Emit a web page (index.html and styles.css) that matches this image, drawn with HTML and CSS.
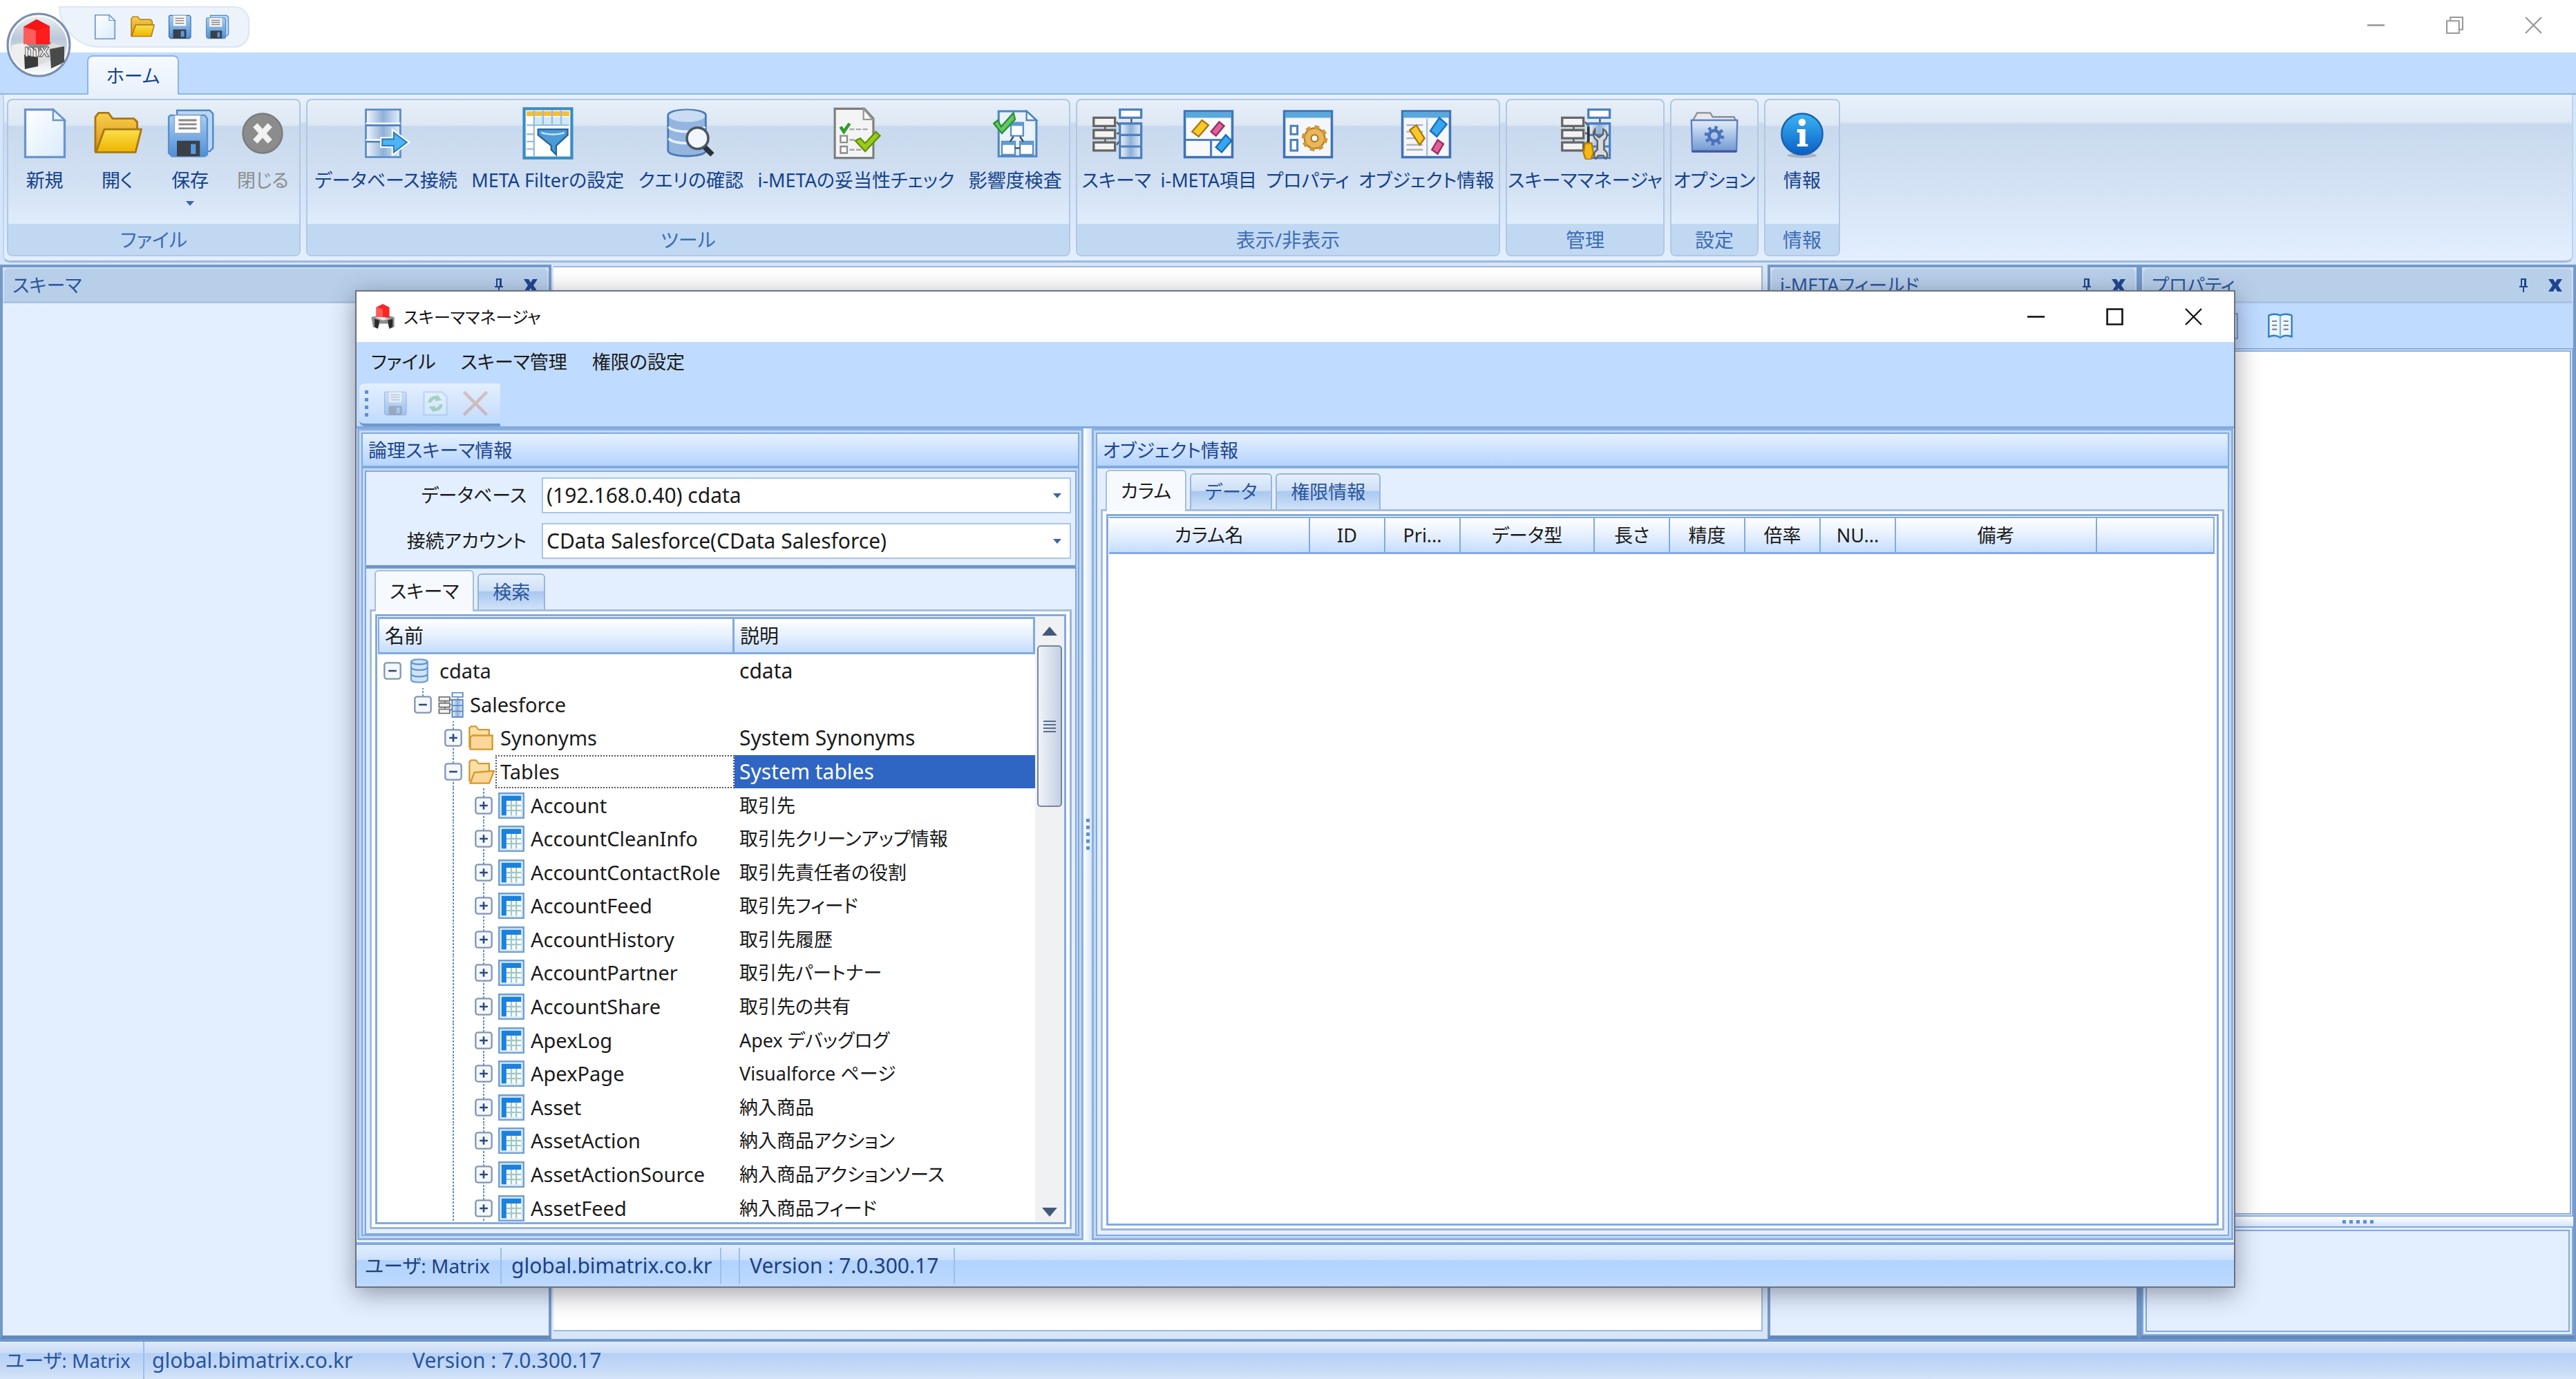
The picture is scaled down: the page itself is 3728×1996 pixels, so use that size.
FILE: index.html
```html
<!DOCTYPE html>
<html lang="ja">
<head>
<meta charset="utf-8">
<title>スキーママネージャ</title>
<link rel="stylesheet" href="styles.css">
</head>
<body>
<svg class="defs" aria-hidden="true">
  <defs>
    <linearGradient id="gPaper" x1="0" y1="0" x2="1" y2="1"><stop offset="0" stop-color="#fff"/><stop offset="1" stop-color="#d9ebfc"/></linearGradient>
    <linearGradient id="gGold" x1="0" y1="0" x2="0" y2="1"><stop offset="0" stop-color="#fbe04a"/><stop offset="1" stop-color="#eeb400"/></linearGradient>
    <linearGradient id="gGoldDark" x1="0" y1="0" x2="0" y2="1"><stop offset="0" stop-color="#f9cf4e"/><stop offset="1" stop-color="#d98f0e"/></linearGradient>
    <linearGradient id="gDisk" x1="0" y1="0" x2="0" y2="1"><stop offset="0" stop-color="#a9cdf2"/><stop offset="1" stop-color="#4f8fd6"/></linearGradient>
    <linearGradient id="gSteel" x1="0" y1="0" x2="1" y2="0"><stop offset="0" stop-color="#f2f7fd"/><stop offset=".5" stop-color="#8fb0d8"/><stop offset="1" stop-color="#e4eefa"/></linearGradient>
    <linearGradient id="gInfo" x1="0" y1="0" x2="0" y2="1"><stop offset="0" stop-color="#3cb4f5"/><stop offset="1" stop-color="#0a5fc4"/></linearGradient>
    <linearGradient id="gOrb" x1="0" y1="0" x2="0" y2="1"><stop offset="0" stop-color="#eef3f9"/><stop offset=".4" stop-color="#b9c7d8"/><stop offset="1" stop-color="#fdfdfe"/></linearGradient>
    <linearGradient id="gFold" x1="0" y1="0" x2="0" y2="1"><stop offset="0" stop-color="#e3edf9"/><stop offset="1" stop-color="#6f98d2"/></linearGradient>
  </defs>
  <symbol id="i-new" viewBox="0 0 32 32"><path d="M4 1.500h17l7 6.500v22.500H4z" fill="url(#gPaper)" stroke="#6a95cb" stroke-width="1.400"/><path d="M21 1.500V8h7z" fill="#eaf4ff" stroke="#6a95cb"/></symbol>
  <symbol id="i-open" viewBox="0 0 32 32"><path d="M2.500 27V6l2-2.500h6L13 7h13l2 2v5L7 27z" fill="url(#gGoldDark)" stroke="#a87714" stroke-width="1.200"/><path d="M3 27.500 8 13.500h22.500L27 27.500z" fill="url(#gGold)" stroke="#a87714" stroke-width="1.200"/></symbol>
  <symbol id="i-save" viewBox="0 0 32 32"><path d="M4 2h24l1.500 2v24.500L28 30H5l-2-2V3z" fill="url(#gDisk)" stroke="#356cae"/><path d="M8 2h16v13H8z" fill="#fafafa" stroke="#8ea9c8" stroke-width=".600"/><path d="M10.500 5.500h11M10.500 8.500h11M10.500 11.500h11" stroke="#888" stroke-width="1.300"/><path d="M8 19h16v11H8z" fill="#3b4047"/><path d="M17.500 21h4v7h-4z" fill="#5a9be0"/></symbol>
  <symbol id="i-saveall" viewBox="0 0 32 32"><path d="M8 2h20l2 2v21l-2 2H10z" fill="#b8d6f5" stroke="#4e86c8"/><path d="M4 5h21l1.500 2v22L25 30H5l-2-2V6z" fill="url(#gDisk)" stroke="#5a8fce"/><path d="M6.500 5h16v11h-16z" fill="#fafafa" stroke="#8ea9c8" stroke-width=".600"/><path d="M9 8h11M9 10.500h11M9 13h11" stroke="#888" stroke-width="1.200"/><path d="M8 20.500h14V30H8z" fill="#3b4047"/><path d="M16.500 22.500h3v6h-3z" fill="#5a9be0"/></symbol>
  <symbol id="i-close" viewBox="0 0 32 32"><circle cx="16" cy="16" r="12" fill="#8c8c8c" stroke="#7b7b7b"/><path d="m11.500 11 9 10m0-10-9 10" stroke="#f2f2f2" stroke-width="3.600"/></symbol>
  <symbol id="i-dbcon" viewBox="0 0 32 32"><path d="M4 1.500h21v29H4z" fill="url(#gSteel)" stroke="#5f8cc6" stroke-width="1.200"/><path d="M4 11h21M4 21h21" stroke="#4f7fbd" stroke-width="1.400"/><path d="M4 10h21M4 20h21" stroke="#fff"/><path d="M14 19.500h7v-4l8 6-8 6v-4h-7z" fill="#4fb4f2" stroke="#fff" stroke-width="2.600"/><path d="M14 19.500h7v-4l8 6-8 6v-4h-7z" fill="#4fb4f2" stroke="#2a7fc4" stroke-width=".900"/></symbol>
  <symbol id="i-filter" viewBox="0 0 32 32"><path d="M1.500 1h29v30h-29z" fill="#fff" stroke="#3a8cc4" stroke-width="1.800"/><path d="M3 2.500h26v3H3z" fill="#f6bd35"/><path d="M8 6h21v4.500H8z" fill="#cdeafa"/><path d="M7.500 2v28M3 11h26M3 16.500h4M3 21h4M3 25.500h4M13 2v9M18.500 2v9M24 2v9" stroke="#9cbcd8"/><path d="M10 13.500h18v3.500l-7 6.500V29l-3-3v-2.500L10 17z" fill="#4c9ad6" stroke="#24649e"/><path d="M12 15.500c4 1.500 10 1.500 14 0" stroke="#c8e6fa" fill="none"/></symbol>
  <symbol id="i-query" viewBox="0 0 32 32"><path d="M2 5c0-4.500 23-4.500 23 0v21.500c0 4.500-23 4.500-23 0z" fill="#93b5e0" stroke="#4b7cba" stroke-width="1.200"/><ellipse cx="13.500" cy="5.500" rx="11" ry="3.600" fill="#c9dcf3"/><path d="M2.500 12c2 4 20 4 22 0M2.500 19c2 4 20 4 22 0" stroke="#e6f1fc" stroke-width="1.500" fill="none"/><path d="m24 24 5 5" stroke="#2c3138" stroke-width="3.200"/><circle cx="20" cy="19" r="6.500" fill="#f2f7fd" stroke="#4b5563" stroke-width="1.500"/></symbol>
  <symbol id="i-check" viewBox="0 0 32 32"><path d="M3 1h18l5.500 6v24H3z" fill="#f4f4f4" stroke="#7d7d7d" stroke-width="1.300"/><path d="M20.500 1v6.500H26z" fill="#fff" stroke="#999"/><path d="M6.500 17.500h4v4h-4zM6.500 24h4v4h-4z" fill="#fff" stroke="#8c8c8c"/><path d="M12 13.500h11M12 20h8M12 26h8" stroke="#a5a5a5" stroke-dasharray="3 1"/><path d="m6.500 12 2 3 3.500-5" stroke="#2f9c2f" stroke-width="2" fill="none"/><path d="m15.500 20.500 3-1.500 3 3L28 15l2.500 2.500-9 9.500z" fill="#9cca18" stroke="#5f9410"/></symbol>
  <symbol id="i-impact" viewBox="0 0 32 32"><path d="M6 2.500h17l6 5.500v22H6z" fill="#e9f3fd" stroke="#4f86c6" stroke-width="1.300"/><path d="M23 2.500V8h6z" fill="#fff" stroke="#4f86c6"/><path d="M13.500 9.500H21v8h-7.500zM8 21h8v8H8zM19 21h8v8h-8z" fill="#fff" stroke="#5b8cc5"/><path d="M13.500 9.500H21v2h-7.500zM8 21h8v2H8zM19 21h8v2h-8z" fill="#5b9bd8"/><path d="m15 18-2 3m6-3 2 3m-5 4h3" stroke="#444"/><path d="m3 10 2.500-2 2 4L15 3.500l1 4L8 16z" fill="#66c766" stroke="#2b8f35"/></symbol>
  <symbol id="i-schema" viewBox="0 0 32 32"><path d="M25 7v4M9 11v15M16 9l3 4M16 16h4M16 23l3-4" stroke="#555"/><path d="M2 6.500h13v5H2zM2 14h13v5H2zM2 21.500h13v5H2z" fill="#f2f2f2" stroke="#666" stroke-width="1.400"/><path d="M18 1.500h13v5H18z" fill="#fff" stroke="#4b80c0" stroke-width="1.400"/><path d="M18 10h13v21H18z" fill="url(#gSteel)" stroke="#4b80c0" stroke-width="1.400"/><path d="M18 17h13M18 24h13" stroke="#4b80c0" stroke-width="1.300"/></symbol>
  <symbol id="i-item" viewBox="0 0 32 32"><path d="M1.500 2.500h29v28h-29z" fill="#f7f9fb" stroke="#3f73b6" stroke-width="1.500"/><path d="M2 3h28v3.500H2z" fill="#5aa8dc"/><path d="M2 20h28M17.500 20v10" stroke="#4b80c0" stroke-width="1.300"/><path d="m12 8 4 3-6 7-4-3z" fill="#f9c92c" stroke="#a8790a"/><path d="m22.500 9 3 2.500-5 6-3-2.500z" fill="#e0629a" stroke="#9c2e60"/><path d="m26.500 17 3.500 3.500-6 7-3.500-3z" fill="#35a6f0" stroke="#1a6db5"/></symbol>
  <symbol id="i-prop" viewBox="0 0 32 32"><path d="M1.500 2.500h29v28h-29z" fill="#f4f6f9" stroke="#3f73b6" stroke-width="1.500"/><path d="M2 3h28v3.500H2z" fill="#5aa8dc"/><path d="M5.500 11.500h4v5h-4zM5.500 20h4v6.500h-4z" fill="#fff" stroke="#4b80c0" stroke-width="1.300"/><circle cx="20" cy="19" r="6.200" fill="#e9b65c" stroke="#b07c22"/><circle cx="20" cy="19" r="6.800" fill="none" stroke="#cf963a" stroke-width="2.200" stroke-dasharray="2.800 2.500"/><circle cx="20" cy="19" r="2.100" fill="#fff" stroke="#b07c22"/></symbol>
  <symbol id="i-object" viewBox="0 0 32 32"><path d="M1.500 2.500h29v28h-29z" fill="#f4f6f9" stroke="#3f73b6" stroke-width="1.500"/><path d="M2 3h28v3.500H2z" fill="#5aa8dc"/><path d="M16.500 7v23" stroke="#a9bfdc"/><path d="M4 11h10M4 15h10M4 19h10M4 23h10M4 26h10" stroke="#aab2bd"/><path d="m6 14 4-3 5 8-3 4z" fill="#f9c92c" stroke="#a8790a"/><path d="m24 6.500 4.500 4-6 7.500-4-3.500z" fill="#35a6f0" stroke="#1a6db5"/><path d="m23 20 3.500 2.500-3.500 6-3.500-2.500z" fill="#e0629a" stroke="#9c2e60"/></symbol>
  <symbol id="i-manager" viewBox="0 0 32 32"><use href="#i-schema" width="32" height="32"/><path d="M18 12v10" stroke="#333" stroke-width="1.500"/><path d="M16 22h4l1 6-1.500 4h-3L15 28z" fill="#f5b915" stroke="#b67f08"/><path d="M22 13.500v3l2.500 2 2.500-2v-3c3 1.500 3 5 .500 7V26c2.500 1.500 2.500 4 1 5.500l-1.500-2h-3l-1.500 2c-1.500-1.500-1.500-4 1-5.500v-5.500c-3-2-3-5.500-1.500-7z" fill="#d6d9dd" stroke="#5c6066"/></symbol>
  <symbol id="i-option" viewBox="0 0 32 32"><path d="M3 8 5.500 3.500h8L15 6h13l1.500 3H3z" fill="#e9e9ec" stroke="#8b8d98"/><path d="M2 8h28l-.500 19h-27z" fill="url(#gFold)" stroke="#5a7fc0"/><path d="M2.500 27h27" stroke="#4553a5" stroke-width="1.400"/><circle cx="16" cy="17.500" r="3.200" fill="none" stroke="#4a72bb" stroke-width="2"/><circle cx="16" cy="17.500" r="5" fill="none" stroke="#4a72bb" stroke-width="2" stroke-dasharray="1.800 2.120"/></symbol>
  <symbol id="i-info" viewBox="0 0 32 32"><ellipse cx="16" cy="29.500" rx="9" ry="1.500" fill="#a9b4c6"/><circle cx="16" cy="16.500" r="12.500" fill="url(#gInfo)" stroke="#1a5fae"/><circle cx="16" cy="9.300" r="2.200" fill="#fff"/><path d="M13 13.500h5v9h1.500V24h-6.500v-1.500h1.500v-7H13z" fill="#fff"/></symbol>
  <symbol id="i-cubes" viewBox="0 0 16 16"><path d="m1 8 4-1 3 2 3-2 4 1v6l-3 1-1-3H6l-1 3-3-1z" fill="#8e8e8e"/><path d="m3 9 3 1-1 5-2-1zM11 10l3-1v5l-2 1z" fill="#2b2b2b"/><path d="m3 8 4 0 5 1-4 1z" fill="#e8e8e8"/><path d="m4 2 4-2 4 2v6H4z" fill="#fb2424"/><path d="m4 2 4 1v5H4z" fill="#ff5a5a"/></symbol>
  <symbol id="i-db" viewBox="0 0 16 16"><path d="M2.500 2.500c0-2 10-2 10 0v11c0 2-10 2-10 0z" fill="#cfe4f8" stroke="#6da2d6"/><path d="M2.500 2.500c1 2 9 2 10 0M2.500 6c1 2 9 2 10 0M2.500 10c1 2 9 2 10 0" stroke="#5f95cc" fill="none"/></symbol>
  <symbol id="i-folder" viewBox="0 0 16 16"><path d="M1 14V2l1-1h3l1.500 2H13v4" fill="#fbe0a4" stroke="#d29a3c"/><path d="M1.500 15V7.500L3 6.500h12V15z" fill="#fbd79a" stroke="#d9972d"/></symbol>
  <symbol id="i-folderopen" viewBox="0 0 16 16"><path d="M1 14V2l1-1h3l1.500 2H13v5" fill="#fbe0a4" stroke="#d29a3c"/><path d="M1.500 15 4 8.500l12-1L13 15z" fill="#fbd79a" stroke="#d9972d"/></symbol>
  <symbol id="i-table" viewBox="0 0 16 16"><path d="M.500.500h15v15H.500z" fill="#dcebfa" stroke="#6f9fd3"/><path d="M2 2h12v12H2z" fill="#fff"/><path d="M2 2h12v3H2zM2 2h3v12H2z" fill="#1a82dc"/><path d="M5 8h9M5 11h9M8 5v9M11 5v9" stroke="#9fc9c4"/></symbol>
  <symbol id="i-plus" viewBox="0 0 12 12"><rect x="1" y="1" width="10" height="10" rx="1.500" fill="#f4f8fd" stroke="#8496b2"/><path d="M3.500 6h5M6 3.500v5" stroke="#2c4a7c" stroke-width="1.100"/></symbol>
  <symbol id="i-minus" viewBox="0 0 12 12"><rect x="1" y="1" width="10" height="10" rx="1.500" fill="#f4f8fd" stroke="#8496b2"/><path d="M3.500 6h5" stroke="#2c4a7c" stroke-width="1.100"/></symbol>
  <symbol id="i-pin" viewBox="0 0 16 24"><path d="M4 2h8v11h2v2H9v7H7v-7H2v-2h2zm2 2v9h3V4z" fill="#1e4690" fill-rule="evenodd"/></symbol>
  <symbol id="i-x" viewBox="0 0 24 24"><path d="M2 3h7l3 5 3-5h7l-6 9 6 9h-7l-3-5-3 5H2l6-9z" fill="#1e4690"/></symbol>
  <symbol id="i-book" viewBox="0 0 16 16"><path d="M1 1.500c2-1 5-1 7 0 2-1 5-1 7 0v13c-2-1-5-1-7 .500-2-1.500-5-1.500-7-.500z" fill="#eef7ff" stroke="#2f7cc8"/><path d="M8 2v12" stroke="#7fb6e6"/><path d="M3 5h3M3 7.500h3M3 10h3M10 5h3M10 7.500h3M10 10h3" stroke="#8a8f96"/></symbol>
  <symbol id="i-refresh" viewBox="0 0 16 16"><path d="M1 1h11l3 3v11H1z" fill="#eaf4fd" stroke="#8fb4dc"/><path d="M4.500 7.500A3.500 3.500 0 0 1 10 5M11.500 8.500A3.500 3.500 0 0 1 6 11" fill="none" stroke="#3fae58" stroke-width="2"/><path d="m9 2.500 3 3.500-4 .500zM7 13.500 4 10l4-.500z" fill="#3fae58"/></symbol>
  <symbol id="i-delete" viewBox="0 0 16 16"><path d="m1 1 14 14M15 1 1 15" stroke="#c9704f" stroke-width="1.800"/></symbol>
  <symbol id="w-min" viewBox="0 0 24 24"><path d="M0 12h24" stroke="currentColor" stroke-width="2.500"/></symbol>
  <symbol id="w-max" viewBox="0 0 24 24"><path d="M1.500 1.500h21v21h-21z" fill="none" stroke="currentColor" stroke-width="2.500"/></symbol>
  <symbol id="w-restore" viewBox="0 0 24 24"><path d="M1 6h17v17H1zM6 6V1h17v17h-5" fill="none" stroke="currentColor" stroke-width="2"/></symbol>
  <symbol id="w-close" viewBox="0 0 24 24"><path d="m1 1 22 22M23 1 1 23" stroke="currentColor" stroke-width="2.200"/></symbol>
</svg>

<header class="titlebar">
  <nav class="quick" aria-label="クイックアクセス">
    <button type="button" aria-label="新規"><svg><use href="#i-new"/></svg></button>
    <button type="button" aria-label="開く"><svg><use href="#i-open"/></svg></button>
    <button type="button" aria-label="保存"><svg><use href="#i-save"/></svg></button>
    <button type="button" aria-label="すべて保存"><svg><use href="#i-saveall"/></svg></button>
  </nav>
  <div class="winbtns winbtns-main">
    <button type="button" aria-label="最小化"><svg><use href="#w-min"/></svg></button>
    <button type="button" aria-label="元に戻す"><svg><use href="#w-restore"/></svg></button>
    <button type="button" aria-label="閉じる"><svg><use href="#w-close"/></svg></button>
  </div>
  <button type="button" class="orb" aria-label="メニュー">
    <svg viewBox="0 0 96 96">
      <circle cx="48" cy="48" r="45" fill="url(#gOrb)" stroke="#7a8fae" stroke-width="3"/>
      <circle cx="48" cy="48" r="42" fill="none" stroke="#fff" stroke-width="2"/>
      <path d="m9 48 18-3 20 12v22l-20-8v10L9 68z" fill="#eeeeee"/>
      <path d="m27 62 20 4v13l-19 4z" fill="#3a3a3a"/>
      <path d="m47 57 20-12 18 5v24L66 82V70l-19 8z" fill="#dcdcdc"/>
      <path d="m64 54 21-4v23L66 82z" fill="#4a4a4a"/>
      <path d="m27 45 20-6 20 6-20 14z" fill="#8d8d8d"/>
      <path d="m26 22 19-11 19 10v26H26z" fill="#ff1c1c"/>
      <path d="m26 22 18 5v20H26z" fill="#ff5c5c"/>
      <path d="m26 22 19-11 19 10-20 6z" fill="#f21616"/>
      <text x="45" y="65" font-size="25" font-weight="bold" text-anchor="middle" fill="#fff" stroke="#555" stroke-width="1">mx</text>
    </svg>
  </button>
</header>

<div class="ribbon-tabs" role="tablist"><button type="button" role="tab" aria-selected="true">ホーム</button></div>

<section class="ribbon">
  <div class="group g-file">
    <div class="tools">
      <button type="button"><svg><use href="#i-new"/></svg>新規</button>
      <button type="button"><svg><use href="#i-open"/></svg>開く</button>
      <button type="button"><svg><use href="#i-saveall"/></svg>保存<i class="drop"></i></button>
      <button type="button" disabled><svg><use href="#i-close"/></svg>閉じる</button>
    </div>
    <h2>ファイル</h2>
  </div>
  <div class="group g-tool">
    <div class="tools">
      <button type="button"><svg><use href="#i-dbcon"/></svg>データベース接続</button>
      <button type="button"><svg><use href="#i-filter"/></svg>META Filterの設定</button>
      <button type="button"><svg><use href="#i-query"/></svg>クエリの確認</button>
      <button type="button"><svg><use href="#i-check"/></svg>i-METAの妥当性チェック</button>
      <button type="button"><svg><use href="#i-impact"/></svg>影響度検査</button>
    </div>
    <h2>ツール</h2>
  </div>
  <div class="group g-view">
    <div class="tools">
      <button type="button"><svg><use href="#i-schema"/></svg>スキーマ</button>
      <button type="button"><svg><use href="#i-item"/></svg>i-META項目</button>
      <button type="button"><svg><use href="#i-prop"/></svg>プロパティ</button>
      <button type="button"><svg><use href="#i-object"/></svg>オブジェクト情報</button>
    </div>
    <h2>表示/非表示</h2>
  </div>
  <div class="group g-admin">
    <div class="tools"><button type="button"><svg><use href="#i-manager"/></svg>スキーママネージャ</button></div>
    <h2>管理</h2>
  </div>
  <div class="group g-option">
    <div class="tools"><button type="button"><svg><use href="#i-option"/></svg>オプション</button></div>
    <h2>設定</h2>
  </div>
  <div class="group g-info">
    <div class="tools"><button type="button"><svg><use href="#i-info"/></svg>情報</button></div>
    <h2>情報</h2>
  </div>
</section>

<main class="work">
  <section class="dock dock-schema">
    <div class="dock-head"><h2>スキーマ</h2><svg class="pin"><use href="#i-pin"/></svg><svg class="x"><use href="#i-x"/></svg></div>
    <div class="dock-body"></div>
  </section>
  <section class="canvas"></section>
  <section class="dock dock-fields">
    <div class="dock-head"><h2>i-METAフィールド</h2><svg class="pin"><use href="#i-pin"/></svg><svg class="x"><use href="#i-x"/></svg></div>
    <div class="dock-body"></div>
  </section>
  <section class="dock dock-props">
    <div class="dock-head"><h2>プロパティ</h2><svg class="pin"><use href="#i-pin"/></svg><svg class="x"><use href="#i-x"/></svg></div>
    <div class="prop-bar"><svg><use href="#i-table"/></svg><svg><use href="#i-book"/></svg></div>
    <div class="prop-grid"></div>
    <div class="grip-row"><i></i><i></i><i></i><i></i><i></i></div>
    <div class="prop-help"></div>
  </section>
</main>

<footer class="status status-main">
  <span class="s-user">ユーザ: Matrix</span><span class="s-host">global.bimatrix.co.kr</span><span class="s-ver">Version : 7.0.300.17</span>
</footer>

<section class="dialog" role="dialog" aria-labelledby="dlg-title">
  <header class="dlg-title">
    <svg class="dlg-icon"><use href="#i-cubes"/></svg>
    <h1 id="dlg-title">スキーママネージャ</h1>
    <div class="winbtns">
      <button type="button" aria-label="最小化"><svg><use href="#w-min"/></svg></button>
      <button type="button" aria-label="最大化"><svg><use href="#w-max"/></svg></button>
      <button type="button" aria-label="閉じる"><svg><use href="#w-close"/></svg></button>
    </div>
  </header>
  <nav class="menu">
    <button type="button">ファイル</button>
    <button type="button">スキーマ管理</button>
    <button type="button">権限の設定</button>
  </nav>
  <div class="toolstrip-row">
    <div class="toolstrip">
      <span class="grip-col"><i></i><i></i><i></i><i></i></span>
      <button type="button" aria-label="保存" disabled><svg><use href="#i-save"/></svg></button>
      <button type="button" aria-label="更新" disabled><svg><use href="#i-refresh"/></svg></button>
      <button type="button" aria-label="削除" disabled><svg><use href="#i-delete"/></svg></button>
    </div>
  </div>
  <div class="panes">
    <section class="pane pane-left">
      <h2>論理スキーマ情報</h2>
      <div class="pane-inner">
        <form class="conn">
          <label for="db">データベース</label>
          <span class="combo"><select id="db"><option>(192.168.0.40) cdata</option></select><i class="drop"></i></span>
          <label for="acc">接続アカウント</label>
          <span class="combo"><select id="acc"><option>CData Salesforce(CData Salesforce)</option></select><i class="drop"></i></span>
        </form>
        <div class="tabs" role="tablist">
          <button type="button" role="tab" aria-selected="true">スキーマ</button>
          <button type="button" role="tab">検索</button>
        </div>
        <div class="tabpage">
          <div class="treebox">
            <div class="treeclip">
              <table class="tree">
                <thead><tr><th class="c-name">名前</th><th>説明</th></tr></thead>
                <tbody>
                  <tr><td><span class="node"><i class="ex"><svg><use href="#i-minus"/></svg></i><svg class="ic"><use href="#i-db"/></svg><b>cdata</b></span></td><td class="latin">cdata</td></tr>
                  <tr><td><span class="node"><i></i><i class="ex up"><svg><use href="#i-minus"/></svg></i><svg class="ic"><use href="#i-schema"/></svg><b>Salesforce</b></span></td><td></td></tr>
                  <tr><td><span class="node"><i></i><i></i><i class="ex mid"><svg><use href="#i-plus"/></svg></i><svg class="ic"><use href="#i-folder"/></svg><b>Synonyms</b></span></td><td class="latin">System Synonyms</td></tr>
                  <tr class="selected"><td><span class="node"><i></i><i></i><i class="ex mid"><svg><use href="#i-minus"/></svg></i><svg class="ic"><use href="#i-folderopen"/></svg><b>Tables</b></span></td><td class="latin">System tables</td></tr>
                  <tr><td><span class="node"><i></i><i></i><i class="ln"></i><i class="ex mid"><svg><use href="#i-plus"/></svg></i><svg class="ic"><use href="#i-table"/></svg><b>Account</b></span></td><td>取引先</td></tr>
                  <tr><td><span class="node"><i></i><i></i><i class="ln"></i><i class="ex mid"><svg><use href="#i-plus"/></svg></i><svg class="ic"><use href="#i-table"/></svg><b>AccountCleanInfo</b></span></td><td>取引先クリーンアップ情報</td></tr>
                  <tr><td><span class="node"><i></i><i></i><i class="ln"></i><i class="ex mid"><svg><use href="#i-plus"/></svg></i><svg class="ic"><use href="#i-table"/></svg><b>AccountContactRole</b></span></td><td>取引先責任者の役割</td></tr>
                  <tr><td><span class="node"><i></i><i></i><i class="ln"></i><i class="ex mid"><svg><use href="#i-plus"/></svg></i><svg class="ic"><use href="#i-table"/></svg><b>AccountFeed</b></span></td><td>取引先フィード</td></tr>
                  <tr><td><span class="node"><i></i><i></i><i class="ln"></i><i class="ex mid"><svg><use href="#i-plus"/></svg></i><svg class="ic"><use href="#i-table"/></svg><b>AccountHistory</b></span></td><td>取引先履歴</td></tr>
                  <tr><td><span class="node"><i></i><i></i><i class="ln"></i><i class="ex mid"><svg><use href="#i-plus"/></svg></i><svg class="ic"><use href="#i-table"/></svg><b>AccountPartner</b></span></td><td>取引先パートナー</td></tr>
                  <tr><td><span class="node"><i></i><i></i><i class="ln"></i><i class="ex mid"><svg><use href="#i-plus"/></svg></i><svg class="ic"><use href="#i-table"/></svg><b>AccountShare</b></span></td><td>取引先の共有</td></tr>
                  <tr><td><span class="node"><i></i><i></i><i class="ln"></i><i class="ex mid"><svg><use href="#i-plus"/></svg></i><svg class="ic"><use href="#i-table"/></svg><b>ApexLog</b></span></td><td>Apex デバッグログ</td></tr>
                  <tr><td><span class="node"><i></i><i></i><i class="ln"></i><i class="ex mid"><svg><use href="#i-plus"/></svg></i><svg class="ic"><use href="#i-table"/></svg><b>ApexPage</b></span></td><td>Visualforce ページ</td></tr>
                  <tr><td><span class="node"><i></i><i></i><i class="ln"></i><i class="ex mid"><svg><use href="#i-plus"/></svg></i><svg class="ic"><use href="#i-table"/></svg><b>Asset</b></span></td><td>納入商品</td></tr>
                  <tr><td><span class="node"><i></i><i></i><i class="ln"></i><i class="ex mid"><svg><use href="#i-plus"/></svg></i><svg class="ic"><use href="#i-table"/></svg><b>AssetAction</b></span></td><td>納入商品アクション</td></tr>
                  <tr><td><span class="node"><i></i><i></i><i class="ln"></i><i class="ex mid"><svg><use href="#i-plus"/></svg></i><svg class="ic"><use href="#i-table"/></svg><b>AssetActionSource</b></span></td><td>納入商品アクションソース</td></tr>
                  <tr><td><span class="node"><i></i><i></i><i class="ln"></i><i class="ex mid"><svg><use href="#i-plus"/></svg></i><svg class="ic"><use href="#i-table"/></svg><b>AssetFeed</b></span></td><td>納入商品フィード</td></tr>
                </tbody>
              </table>
            </div>
            <div class="scroll"><i class="arrow up"></i><div class="thumb"><i></i><i></i><i></i><i></i></div><i class="arrow down"></i></div>
          </div>
        </div>
      </div>
    </section>
    <div class="splitter"><i></i><i></i><i></i><i></i><i></i></div>
    <section class="pane pane-right">
      <h2>オブジェクト情報</h2>
      <div class="pane-body">
        <div class="tabs" role="tablist">
          <button type="button" role="tab" aria-selected="true">カラム</button>
          <button type="button" role="tab">データ</button>
          <button type="button" role="tab">権限情報</button>
        </div>
        <div class="tabpage">
          <div class="gridbox">
            <table class="cols">
              <colgroup><col class="w-name"><col class="w-s"><col class="w-s"><col class="w-type"><col class="w-s"><col class="w-s"><col class="w-s"><col class="w-s"><col class="w-name"><col></colgroup>
              <thead><tr><th>カラム名</th><th>ID</th><th>Pri...</th><th>データ型</th><th>長さ</th><th>精度</th><th>倍率</th><th>NU...</th><th>備考</th><th></th></tr></thead>
            </table>
          </div>
        </div>
      </div>
    </section>
  </div>
  <footer class="status status-dlg">
    <span class="s-user">ユーザ: Matrix</span><span class="s-host">global.bimatrix.co.kr</span><span class="s-gap"></span><span class="s-ver">Version : 7.0.300.17</span>
  </footer>
</section>
</body>
</html>
```
FILE: styles.css
```css
:root {
  --line: #82aadf;
  --line-dark: #6f97cc;
  --frame: #c3d8f4;
  --panel: #e3efff;
  --sky: #bfdbff;
  --navy: #1e4690;
}
* { box-sizing: border-box; }
html, body { height: 100%; }
body {
  margin: 0;
  display: flex;
  flex-direction: column;
  position: relative;
  overflow: hidden;
  background: #d7e5f7;
  color: #1a1a1a;
  font: 27px/40px "Noto Sans", "Noto Sans CJK JP", sans-serif;
  font-feature-settings: "palt";
}
h1, h2 { margin: 0; font-size: inherit; font-weight: 400; }
button, select { font: inherit; font-feature-settings: inherit; color: inherit; border: 0; background: none; padding: 0; margin: 0; white-space: nowrap; }
i { display: block; font-style: normal; }
svg { display: block; }
.defs { position: absolute; width: 0; height: 0; }
.drop { width: 0; border: 6px solid transparent; border-top: 7px solid #3e66a8; border-bottom: 0; }

/* main window title */
.titlebar { position: relative; flex: none; height: 76px; display: flex; justify-content: space-between; align-items: flex-start; background: #fff; }
.quick { display: flex; gap: 16px; align-items: center; height: 60px; margin: 9px 0 0 85px; padding: 0 26px 0 46px; border: 2px solid #dbe6f4; border-radius: 0 32px 32px 90px; background: #edf3fb; }
.quick svg { width: 38px; height: 38px; }
.winbtns { display: flex; gap: 89px; padding-right: 46px; align-items: center; }
.winbtns svg { width: 25px; height: 25px; }
.winbtns-main { color: #999; padding: 24px 49px 0 0; }
.orb { position: absolute; left: 8px; top: 17px; z-index: 2; }
.orb svg { width: 96px; height: 96px; }
.orb text { font-family: "Liberation Sans", sans-serif; }

/* ribbon */
.ribbon-tabs { flex: none; height: 61px; padding: 4px 0 0 126px; background: var(--sky); border-bottom: 2px solid #8fb4e6; }
.ribbon-tabs button { height: 57px; width: 133px; border: 2px solid #8fb4e6; border-bottom: 0; border-radius: 8px 8px 0 0; background: linear-gradient(#f6faff, #e8f0fa); color: #15428b; }
.ribbon { flex: none; height: 243px; display: flex; gap: 8px; margin: 0 4px; padding: 6px 4px; border: 2px solid #b7d6f2; border-top: 0; border-bottom: 3px solid #9db9dc; border-radius: 0 0 10px 10px; background: linear-gradient(#e9f1fb, #dde9f6 16%, #c9d9ed 18%, #d3e2f4 55%, #e3efff); }
.group { display: flex; flex-direction: column; border: 2px solid #b0c8e4; border-radius: 8px; overflow: hidden; background: linear-gradient(#e7eff8, #dde8f4 16%, #c9d9ed 17%, #d2e1f3 55%, #dfecfc 80%); }
.tools { flex: 1; display: flex; padding: 10px 0 0; }
.tools button { flex: 1 0 auto; display: flex; flex-direction: column; align-items: center; justify-content: flex-start; color: #15428b; gap: 10px; }
.tools svg { width: 76px; height: 76px; }
.tools button:disabled { color: #8d8d8d; }
.group h2 { flex: none; height: 45px; padding-top: 3px; text-align: center; background: #c1d8f2; color: #3e6db5; font-size: 28px; }
.g-file { width: 425px; }
.g-file .tools button { flex: 1 1 0; }
.g-tool { width: 1106px; }
.g-view { width: 614px; }
.g-admin { width: 230px; }
.g-option { width: 128px; }
.g-info { width: 110px; }

/* docked panels */
.work { flex: 1; min-height: 0; display: grid; grid-template-columns: 798px minmax(0, 1fr) 538px 632px; border-bottom: 4px solid var(--line-dark); margin-top: 3px; }
.dock { display: flex; flex-direction: column; min-width: 0; border: 4px solid #7499c9; border-bottom: 5px solid #6388bb; }
.dock-head { flex: none; display: flex; align-items: center; height: 52px; padding: 0 12px; border: 2px solid #ccdcf0; border-bottom: 3px solid #a9c3e2; border-radius: 8px 8px 0 0; background: #b8cfea; color: #2a559c; }
.dock-head h2 { flex: 1; }
.pin { width: 16px; height: 26px; margin-right: 26px; }
.x { width: 24px; height: 24px; }
.dock-body { flex: 1; background: var(--panel); }
.canvas { margin: 2px 7px 11px 3px; border: 2px solid #9db9dc; border-left: 0; background: #fff; }
.prop-bar { flex: none; display: flex; gap: 40px; align-items: center; height: 65px; padding-left: 100px; background: var(--sky); }
.prop-bar svg { width: 40px; height: 38px; }
.prop-grid { flex: 1; background: #fff; border: 5px double var(--line); }
.grip-row { flex: none; display: flex; gap: 5px; justify-content: center; align-items: center; height: 14px; background: linear-gradient(#fff, #d5e5fa); }
.grip-row i { width: 5px; height: 5px; background: #5b8fd4; }
.prop-help { flex: none; height: 158px; background: var(--panel); border: 7px double var(--line); }

/* status bars */
.status { flex: none; display: flex; align-items: center; white-space: nowrap; color: #1f3f7d; font-size: 30px; }
.status span { height: 100%; display: flex; align-items: center; border-right: 2px solid #9dbfe9; }
.status .s-user { font-size: 28px; }
.status-main { height: 54px; color: #2a559c; background: linear-gradient(#dfeafa, #c8dcf6 30%, #b4cff6 32%, #c8dcf6 80%, #d6e5f7); }
.status-main .s-user { width: 209px; padding-left: 8px; }
.status-main .s-host { width: 388px; padding-left: 11px; border: 0; }
.status-main .s-ver { border: 0; }

/* schema manager window */
.dialog { position: absolute; left: 514px; right: 493px; top: 420px; bottom: 132px; display: flex; flex-direction: column; border: 2px solid #6b7280; background: var(--sky); box-shadow: 0 8px 34px rgba(40, 40, 60, .45); }
.dlg-title { flex: none; display: flex; align-items: center; height: 73px; padding-left: 19px; background: #fff; color: #111; }
.dlg-icon { width: 38px; height: 38px; margin-right: 11px; }
.dlg-title h1 { flex: 1; font-size: 24px; }
.menu { flex: none; display: flex; gap: 36px; height: 60px; padding: 0 21px 2px; }
.toolstrip-row { flex: none; height: 62px; padding-left: 4px; }
.toolstrip { display: flex; align-items: center; gap: 20px; width: 204px; height: 62px; padding: 0 0 0 8px; border-bottom: 4px solid var(--line-dark); border-radius: 8px 0 0 8px; background: linear-gradient(#e3efff, #d0e3fc 60%, #bfdbff); }
.toolstrip svg { width: 38px; height: 38px; opacity: .35; }
.grip-col { display: grid; gap: 6px; width: 5px; }
.grip-col i { height: 5px; background: #5b8fd4; }
.panes { flex: 1; min-height: 0; display: grid; grid-template-columns: 1051px 12px minmax(0, 1fr); padding: 0 1px 3px; border-top: 3px solid var(--line); border-bottom: 4px solid var(--line); background: #e9f2fe; }
.pane { display: flex; flex-direction: column; min-width: 0; min-height: 0; border: 3px solid #8ab0e2; outline: 2px solid var(--line); outline-offset: -8px; padding: 5px; background: var(--frame); }
.pane > h2 { flex: none; height: 50px; padding: 4px 8px 0; border-bottom: 4px solid var(--line); background: linear-gradient(#e6f1ff, #b4d4ff); color: var(--navy); }
.splitter { display: flex; flex-direction: column; justify-content: center; align-items: center; gap: 5px; background: linear-gradient(90deg, #fff, #d5e5fa); }
.splitter i { width: 5px; height: 5px; background: #5b8fd4; }
.pane-inner, .pane-body { flex: 1; min-height: 0; display: flex; flex-direction: column; background: var(--panel); }
.pane-inner { margin: 3px 2px 0 3px; border: 2px solid var(--line); }
.conn { flex: none; display: grid; grid-template-columns: 232px 1fr; gap: 14px 22px; align-items: center; height: 140px; padding: 8px 6px 0 0; border-bottom: 5px solid #6a96d2; align-content: start; }
.conn label { text-align: right; }
.combo { position: relative; display: flex; align-items: center; height: 52px; border: 2px solid #abc5e6; background: #fff; }
.combo select { appearance: none; flex: 1; height: 100%; padding-left: 5px; font-size: 30px; color: #1a1a1a; }
.combo .drop { margin: 0 12px 0 8px; }
.tabs { flex: none; display: flex; align-items: flex-end; gap: 5px; height: 59px; padding: 0 12px; }
.tabs button { height: 52px; padding: 0 20px; border: 2px solid #9ab5dc; border-bottom: 0; border-radius: 6px 6px 0 0; background: linear-gradient(#e6f0fc, #cfe0f6 45%, #a9c8f0 50%, #d0e2f8); color: #2a559c; }
.tabs button[aria-selected] { position: relative; z-index: 1; height: 60px; margin-bottom: -3px; border-color: #a5bedf; background: #f6faff; color: #1a1a1a; }
.tabpage { flex: 1; min-height: 0; display: flex; margin: 0 5px 6px 5px; padding: 4px 5px; border: 3px solid #a5bedf; border-right-color: #9db4d4; border-bottom-color: #9db4d4; background: #fff; }
.treebox, .gridbox { flex: 1; min-width: 0; min-height: 0; display: flex; border: 3px solid var(--line); background: #fff; }
.treebox { padding: 1px 0 0 1px; }
.treeclip { flex: 1; min-width: 0; overflow: hidden; }

.tree { width: 100%; height: 880px; border-collapse: separate; border-spacing: 0; table-layout: fixed; }
.tree th { height: 54px; padding: 0 8px; text-align: left; font-weight: 400; font-size: 28px; border: 3px solid var(--line); border-left-width: 0; background: linear-gradient(#fff, #e6f0fe 50%, #c5ddfe); }
.tree th:first-child { border-left-width: 2px; }
.tree .c-name { width: 516px; }
.tree td { padding: 0 0 0 7px; white-space: nowrap; overflow: hidden; }
.tree td:first-child { padding: 0; }
.tree .latin { font-size: 30px; }
.node { display: flex; align-items: center; height: 48px; }
.node i { flex: none; width: 44px; height: 50px; }
.node .ex { width: 41px; display: grid; place-items: center; }
.node .ex svg { width: 28px; height: 28px; }
.node .ln, .node .mid { background: repeating-linear-gradient(#5b8fc9 0 3px, transparent 3px 5px) 20px 0 / 2px 100% no-repeat; }
.node .up { background: repeating-linear-gradient(#5b8fc9 0 3px, transparent 3px 5px) 20px 0 / 2px 30% no-repeat; }
.node .ic { flex: none; width: 40px; height: 38px; }
.node b { flex: 1; height: 48px; line-height: 44px; margin-left: 1px; padding-left: 5px; font-size: 29px; font-weight: 400; border: 2px solid transparent; }
.tree .selected td + td { background: #2f66c4; color: #fff; }
.tree .selected b { border: 2px dotted #555; }

.scroll { flex: none; width: 42px; display: flex; flex-direction: column; align-items: center; padding: 14px 0 8px; background: #f0f1f3; }
.arrow { width: 0; border: 11px solid transparent; }
.arrow.up { border-top: 0; border-bottom: 13px solid #44587c; }
.arrow.down { border-bottom: 0; border-top: 13px solid #44587c; margin-top: auto; }
.thumb { display: grid; align-content: center; justify-items: center; gap: 3px; width: 36px; height: 234px; margin-top: 14px; border: 2px solid #76859f; border-radius: 5px; background: linear-gradient(90deg, #f0f4fa, #c4d0e2); }
.thumb i { width: 18px; height: 2px; background: #5b6c8c; }

.cols { width: 100%; height: 54px; border-collapse: separate; border-spacing: 0; table-layout: fixed; }
.cols th { padding: 0; font-weight: 400; border: solid var(--line); border-width: 2px 2px 3px 0; background: linear-gradient(#fff, #e6f0fe 50%, #c5ddfe); }
.gridbox { align-items: flex-start; padding: 1px 3px 0 1px; }
.w-name { width: 291px; }
.w-s { width: 109px; }
.w-type { width: 194px; }

.status-dlg { height: 60px; background: linear-gradient(#e0edfe, #cde1fd 35%, #b1d3ff 38%, #bddaff); }
.status-dlg span { height: 52px; }
.status-dlg .s-user { width: 210px; padding-left: 12px; }
.status-dlg .s-host { width: 318px; padding-left: 14px; }
.status-dlg .s-gap { width: 27px; }
.status-dlg .s-ver { width: 311px; padding-left: 14px; }
```
